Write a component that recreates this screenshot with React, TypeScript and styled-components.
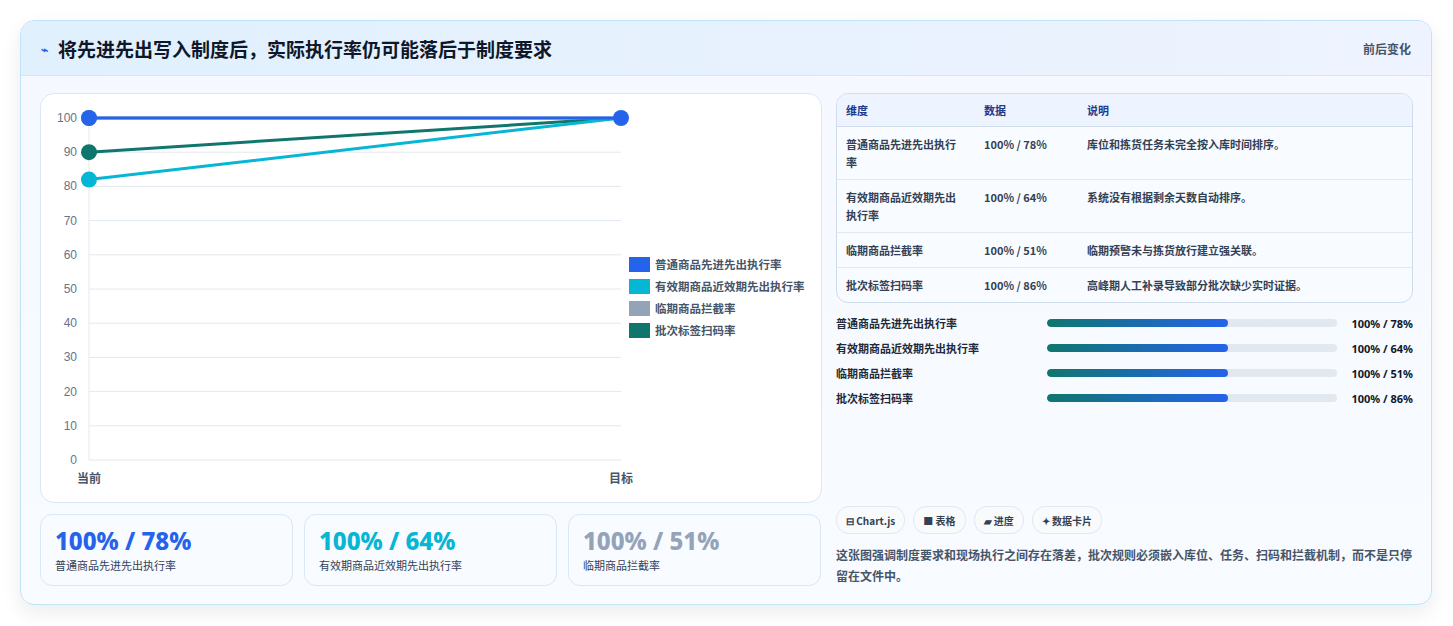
import { createGlobalStyle, styled } from 'styled-components';

const Global = createGlobalStyle`
  body { margin: 0; background: #fff; font-family: "Noto Sans CJK SC", "Noto Sans", sans-serif; color: #1e293b; }
`;

const Page = styled.div`
  padding: 20px 21px 22px 20px;
`;

const Card = styled.div`
  border: 1px solid #bfe3f7;
  border-radius: 14px;
  background: linear-gradient(180deg, #f5f9ff, #f8fbff);
  box-shadow: 0 8px 20px rgba(15, 23, 42, 0.08);
  overflow: hidden;
`;

const Header = styled.div`
  height: 54px;
  display: flex;
  align-items: center;
  justify-content: space-between;
  padding: 0 20px;
  background: linear-gradient(90deg, #e0f0fd, #eef3ff);
  border-bottom: 1px solid #d6e6f5;
`;

const Title = styled.h1`
  margin: 0;
  font-size: 19px;
  font-weight: 700;
  color: #0f172a;
  display: flex;
  align-items: center;
  gap: 10px;
`;

const Tag = styled.span`
  font-size: 12px;
  font-weight: 700;
  color: #475569;
`;

const Body = styled.div`
  display: grid;
  grid-template-columns: 782px 1fr;
  gap: 14px;
  padding: 17px 18px 18px 19px;
`;

const Col = styled.div`
  display: flex;
  flex-direction: column;
  gap: 11px;
`;

const ChartBox = styled.div`
  height: 408px;
  background: #fff;
  border: 1px solid #dbe7f3;
  border-radius: 14px;
`;

const Stats = styled.div`
  display: grid;
  grid-template-columns: repeat(3, 253px);
  gap: 11px;
`;

const Stat = styled.div`
  height: 72px;
  border: 1px solid #dbe7f3;
  border-radius: 12px;
  background: #f8fbff;
  padding: 10px 14px;
  box-sizing: border-box;
`;

const StatValue = styled.div<{ $color: string }>`
  font-family: "Noto Sans", sans-serif;
  font-size: 24px;
  font-weight: 800;
  line-height: 32px;
  color: ${(p) => p.$color};
`;

const StatLabel = styled.div`
  font-size: 11px;
  color: #334155;
`;

const Table = styled.table`
  width: 100%;
  border-collapse: separate;
  border-spacing: 0;
  border: 1px solid #cfdceb;
  border-radius: 12px;
  overflow: hidden;
  font-size: 11px;
  background: #f8fbff;
  th {
    text-align: left;
    font-weight: 700;
    color: #1e3a8a;
    background: #eef4ff;
    height: 32px;
    padding: 0 9px;
    border-bottom: 1px solid #cfdceb;
  }
  td {
    padding: 8px 9px;
    line-height: 18px;
    vertical-align: top;
    font-weight: 600;
    color: #334155;
    border-bottom: 1px solid #e2e8f0;
  }
  tr:last-child td { border-bottom: none; }
`;

const Bars = styled.div`
  display: flex;
  flex-direction: column;
  gap: 7px;
  margin-top: 11px;
`;

const BarRow = styled.div`
  display: grid;
  grid-template-columns: 211px 290px 1fr;
  align-items: center;
  font-size: 11px;
  font-weight: 600;
  height: 18px;
`;

const Track = styled.div`
  height: 8px;
  border-radius: 4px;
  background: #e2e8f0;
  overflow: hidden;
`;

const Fill = styled.div`
  height: 100%;
  border-radius: 4px;
  background: linear-gradient(90deg, #0f766e, #2563eb);
`;

const BarValue = styled.span`
  text-align: right;
  font-family: "Noto Sans", sans-serif;
  font-weight: 700;
  color: #0f172a;
`;

const Chips = styled.div`
  display: flex;
  gap: 8px;
  margin-top: auto;
`;

const Chip = styled.span`
  height: 26px;
  padding: 0 9px;
  display: inline-flex;
  align-items: center;
  gap: 3px;
  border: 1px solid #e2e8f0;
  border-radius: 13px;
  background: #f8fafc;
  font-size: 10px;
  font-weight: 700;
  color: #334155;
`;

const Note = styled.p`
  margin: 10px 0 0;
  font-size: 12px;
  line-height: 21px;
  font-weight: 600;
  color: #475569;
`;

const rows = [
  { name: '普通商品先进先出执行率', data: '100% / 78%', note: '库位和拣货任务未完全按入库时间排序。', color: '#2563eb' },
  { name: '有效期商品近效期先出执行率', data: '100% / 64%', note: '系统没有根据剩余天数自动排序。', color: '#06b6d4' },
  { name: '临期商品拦截率', data: '100% / 51%', note: '临期预警未与拣货放行建立强关联。', color: '#94a3b8' },
  { name: '批次标签扫码率', data: '100% / 86%', note: '高峰期人工补录导致部分批次缺少实时证据。', color: '#0f766e' },
];

const X0 = 48;
const X1 = 580;
const yOf = (v: number) => 24 + (100 - v) * 3.42;

function Chart() {
  const ticks = [0, 10, 20, 30, 40, 50, 60, 70, 80, 90, 100];
  const lines = [
    { c: '#2563eb', v: 100 },
    { c: '#06b6d4', v: 82 },
    { c: '#94a3b8', v: 100 },
    { c: '#0f766e', v: 90 },
  ];
  return (
    <svg width="782" height="408" style={{ display: 'block' }}>
      {ticks.map((t) => (
        <g key={t}>
          <line x1={X0} x2={X1} y1={yOf(t)} y2={yOf(t)} stroke="#e2e8f0" />
          <text x={36} y={yOf(t) + 4} textAnchor="end" fontSize="12" fill="#64748b" fontFamily="Liberation Sans">{t}</text>
        </g>
      ))}
      <line x1={X0} x2={X0} y1={yOf(100)} y2={yOf(0)} stroke="#e2e8f0" />
      <text x={X0} y={389} textAnchor="middle" fontSize="12" fill="#475569" fontWeight="600">当前</text>
      <text x={X1} y={389} textAnchor="middle" fontSize="12" fill="#475569" fontWeight="600">目标</text>
      {lines.slice(1).reverse().map((l) => (
        <g key={l.c}>
          <line x1={X0} y1={yOf(l.v)} x2={X1} y2={yOf(100)} stroke={l.c} strokeWidth="3" />
          <circle cx={X0} cy={yOf(l.v)} r="8" fill={l.c} />
        </g>
      ))}
      <line x1={X0} y1={yOf(100)} x2={X1} y2={yOf(100)} stroke="#2563eb" strokeWidth="3" />
      <circle cx={X0} cy={yOf(100)} r="8" fill="#2563eb" />
      <circle cx={X1} cy={yOf(100)} r="8" fill="#2563eb" />
      {rows.map((r, i) => (
        <g key={r.name}>
          <rect x={588} y={163 + i * 22} width="21" height="15" fill={r.color} />
          <text x={614} y={175 + i * 22} fontSize="11.5" fill="#475569" fontWeight="600">{r.name}</text>
        </g>
      ))}
    </svg>
  );
}

export default function App() {
  return (
    <Page>
      <Global />
      <Card>
        <Header>
          <Title>
            <span style={{ color: '#2563eb', fontSize: 12 }}>⌁</span>
            将先进先出写入制度后，实际执行率仍可能落后于制度要求
          </Title>
          <Tag>前后变化</Tag>
        </Header>
        <Body>
          <Col>
            <ChartBox>
              <Chart />
            </ChartBox>
            <Stats>
              {rows.slice(0, 3).map((r) => (
                <Stat key={r.name}>
                  <StatValue $color={r.color}>{r.data}</StatValue>
                  <StatLabel>{r.name}</StatLabel>
                </Stat>
              ))}
            </Stats>
          </Col>
          <Col style={{ gap: 0 }}>
            <Table>
              <thead>
                <tr>
                  <th style={{ width: 120 }}>维度</th>
                  <th style={{ width: 85 }}>数据</th>
                  <th>说明</th>
                </tr>
              </thead>
              <tbody>
                {rows.map((r) => (
                  <tr key={r.name}>
                    <td>{r.name}</td>
                    <td>{r.data}</td>
                    <td>{r.note}</td>
                  </tr>
                ))}
              </tbody>
            </Table>
            <Bars>
              {rows.map((r) => (
                <BarRow key={r.name}>
                  <span>{r.name}</span>
                  <Track>
                    <Fill style={{ width: '62.5%' }} />
                  </Track>
                  <BarValue>{r.data}</BarValue>
                </BarRow>
              ))}
            </Bars>
            <Chips>
              <Chip>⊟ Chart.js</Chip>
              <Chip>■ 表格</Chip>
              <Chip>▰ 进度</Chip>
              <Chip>✦ 数据卡片</Chip>
            </Chips>
            <Note>这张图强调制度要求和现场执行之间存在落差，批次规则必须嵌入库位、任务、扫码和拦截机制，而不是只停留在文件中。</Note>
          </Col>
        </Body>
      </Card>
    </Page>
  );
}
